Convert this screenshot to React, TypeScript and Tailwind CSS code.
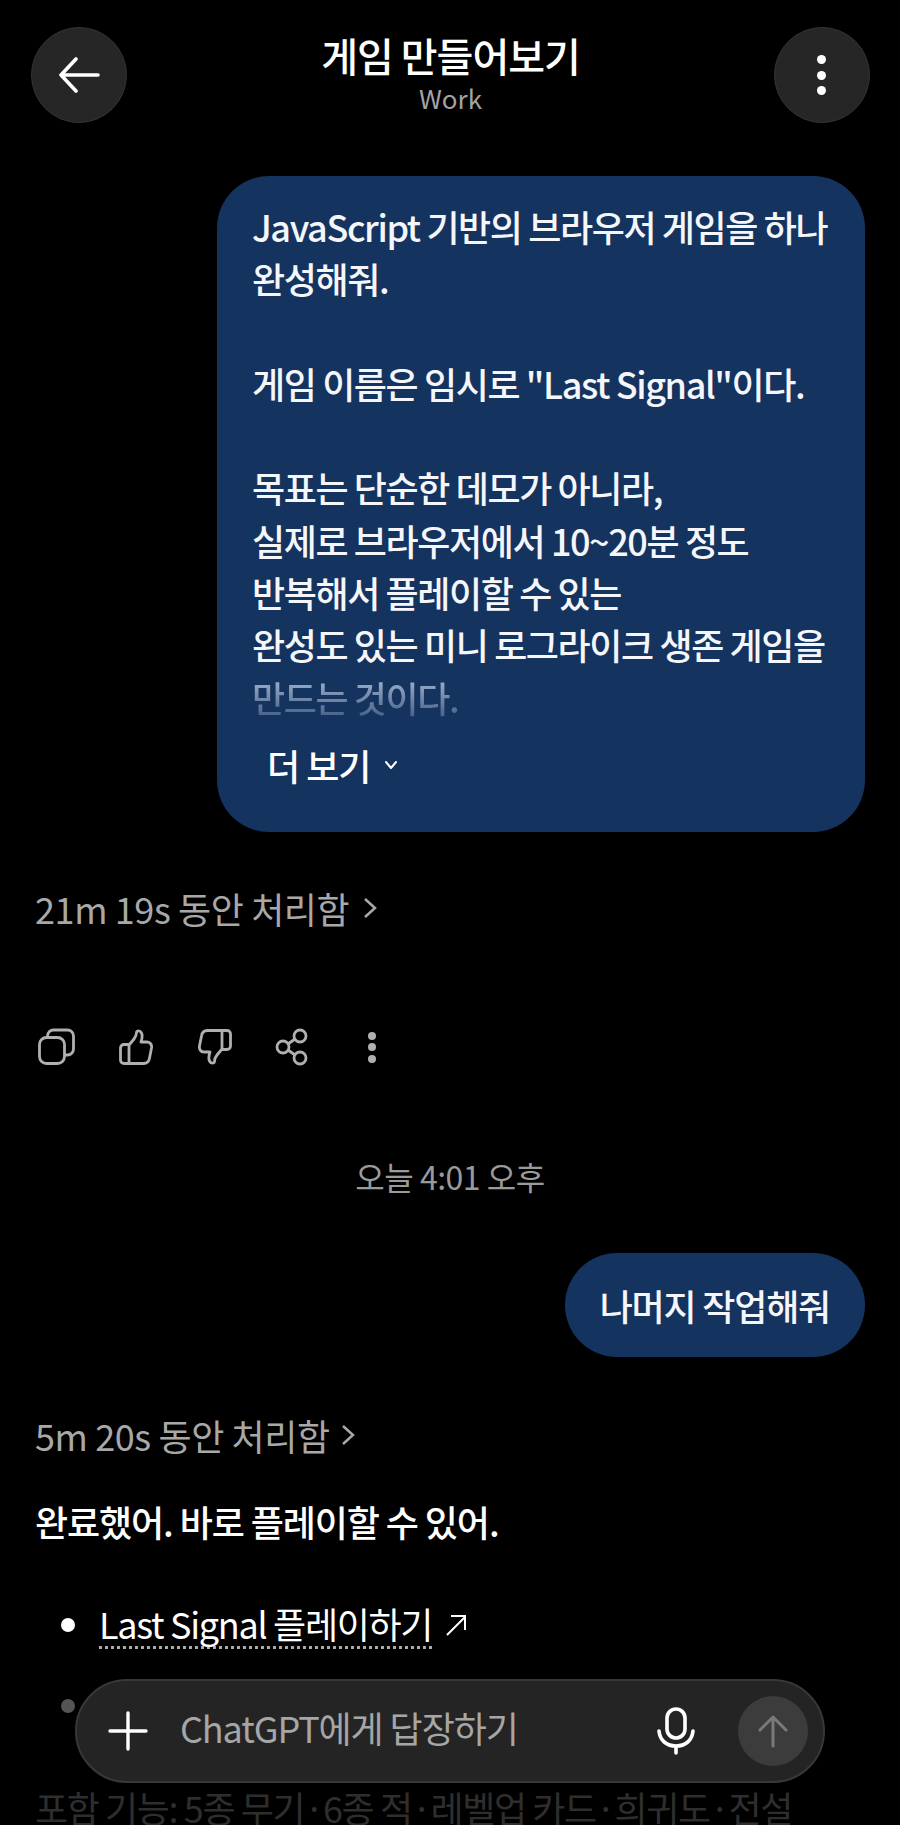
const font = { fontFamily: '"Noto Sans CJK KR", "Noto Sans", sans-serif' }

function Dots({ className, dot }: { className: string; dot: string }) {
    return (
        <div className={`flex flex-col items-center justify-between ${className}`}>
            <span className={`rounded-full bg-current ${dot}`} />
            <span className={`rounded-full bg-current ${dot}`} />
            <span className={`rounded-full bg-current ${dot}`} />
        </div>
    )
}

function CopyIcon() {
    return (
        <svg width="38" height="38" viewBox="0 0 38 38" fill="none" stroke="currentColor" strokeWidth="2.8" strokeLinejoin="round">
            <rect x="1.5" y="9.5" width="25" height="26" rx="7" />
            <path d="M9.5 9.5V8a6 6 0 0 1 6-6h14a6 6 0 0 1 6 6v13a6 6 0 0 1-6 6h-3" />
        </svg>
    )
}

function ThumbIcon({ className }: { className: string }) {
    return (
        <svg className={className} width="34" height="36" viewBox="0 0 34 36" fill="none" stroke="currentColor" strokeWidth="2.8" strokeLinejoin="round" strokeLinecap="round">
            <path d="M10 16l5-6c2-2.500 2.500-5 2.500-6.500 0-2 3.500-2.500 5 .5s.5 6-.5 9h6c3.500 0 5 3 4.500 6l-2 10c-.5 3.500-3 5.500-6 5.500H5c-2 0-3.500-1.500-3.500-3.500V19c0-2 1.500-3.500 3.500-3.500h5v19" />
        </svg>
    )
}

function ShareIcon() {
    return (
        <svg width="34" height="38" viewBox="0 0 34 38" fill="none" stroke="currentColor" strokeWidth="2.8">
            <circle cx="25" cy="8" r="6" />
            <circle cx="8" cy="19" r="6" />
            <circle cx="25" cy="30" r="6" />
            <path d="M13 16l7-5M13 22l7 5" />
        </svg>
    )
}

export default function App() {
    return (
        <div style={font} className="relative w-[900px] h-[1825px] overflow-hidden bg-black text-white">
            {/* header */}
            <header className="flex items-center justify-between pl-[31px] pr-[30px] pt-[27px]">
                <button className="flex items-center justify-center w-[96px] h-[96px] rounded-full bg-[#262626] border border-[#333]">
                    <svg width="42" height="36" viewBox="0 0 42 36" fill="none" stroke="white" strokeWidth="3.6" strokeLinecap="round" strokeLinejoin="round">
                        <path d="M40 18H3M18 2L3 18l15 16" />
                    </svg>
                </button>
                <div className="flex flex-col items-center">
                    <p className="text-[40px] leading-[46px] font-medium tracking-[-1px]">게임 만들어보기</p>
                    <p className="text-[26px] leading-[40px] text-[#a3a3a3]">Work</p>
                </div>
                <button className="flex items-center justify-center w-[96px] h-[96px] rounded-full bg-[#262626] border border-[#333]">
                    <Dots className="h-[40px] text-white" dot="w-[9px] h-[9px]" />
                </button>
            </header>

            {/* first message */}
            <div className="flex justify-end pr-[35px] mt-[53px]">
                <div className="relative w-[648px] h-[656px] rounded-[52px] bg-[#15335f] pl-[35px] pt-[24px]">
                    <p className="text-[36px] leading-[52.3px] font-medium tracking-[-1.4px] whitespace-pre text-[#f4f6fa]">
                        {'JavaScript 기반의 브라우저 게임을 하나\n완성해줘.\n\n게임 이름은 임시로 "Last Signal"이다.\n\n목표는 단순한 데모가 아니라,\n실제로 브라우저에서 10~20분 정도\n반복해서 플레이할 수 있는\n완성도 있는 미니 로그라이크 생존 게임을\n'}
                        <span className="bg-gradient-to-b from-[#b4c2d8] to-[#3a567e] bg-clip-text text-transparent">만드는 것이다.</span>
                    </p>
                    <div className="flex items-center gap-[14px] pl-[15px] mt-[17px]">
                        <span className="text-[36px] leading-[50px] font-medium tracking-[-1px]">더 보기</span>
                        <svg width="14" height="10" viewBox="0 0 14 10" fill="none" stroke="white" strokeWidth="2" strokeLinecap="round" strokeLinejoin="round">
                            <path d="M2 2l5 6 5-6" />
                        </svg>
                    </div>
                </div>
            </div>

            {/* thought time + actions */}
            <div className="flex items-center gap-[14px] pl-[35px] mt-[52px] text-[#a8a8a8]">
                <span className="text-[36px] leading-[48px] tracking-[-0.4px]">21m 19s 동안 처리함</span>
                <svg width="14" height="24" viewBox="0 0 14 24" fill="none" stroke="currentColor" strokeWidth="2.5">
                    <path d="M2 3l10 9-10 9" />
                </svg>
            </div>
            <div className="flex items-center pl-[38px] mt-[96px] h-[38px] text-[#b0b0b0]">
                <CopyIcon />
                <ThumbIcon className="ml-[43px]" />
                <ThumbIcon className="ml-[45px] rotate-180" />
                <div className="ml-[43px]"><ShareIcon /></div>
                <Dots className="h-[31px] ml-[59px]" dot="w-[8px] h-[8px]" />
            </div>

            <p className="text-center text-[32px] leading-[40px] text-[#9a9a9a] tracking-[-0.5px] mt-[90px]">오늘 4:01 오후</p>

            {/* second message */}
            <div className="flex justify-end pr-[35px] mt-[57px]">
                <div className="flex items-center h-[104px] px-[35px] rounded-full bg-[#15335f]">
                    <span className="text-[36px] font-medium tracking-[-1.2px] text-[#f4f6fa]">나머지 작업해줘</span>
                </div>
            </div>

            <div className="flex items-center gap-[11px] pl-[35px] mt-[54px] text-[#a8a8a8]">
                <span className="text-[36px] leading-[48px] tracking-[-0.4px]">5m 20s 동안 처리함</span>
                <svg width="14" height="24" viewBox="0 0 14 24" fill="none" stroke="currentColor" strokeWidth="2.5">
                    <path d="M2 3l10 9-10 9" />
                </svg>
            </div>

            <p className="pl-[35px] mt-[37px] text-[36px] leading-[50px] font-medium tracking-[-1.1px]">완료했어. 바로 플레이할 수 있어.</p>

            <div className="flex items-center pl-[61px] mt-[54px]">
                <span className="w-[14px] h-[14px] rounded-full bg-white" />
                <span className="ml-[24px] text-[36px] leading-[46px] tracking-[-1.3px] border-b-[3px] border-dotted border-[#aaa]">Last Signal 플레이하기</span>
                <svg className="ml-[12px]" width="24" height="24" viewBox="0 0 24 24" fill="none" stroke="white" strokeWidth="2">
                    <path d="M3 22L21 4M7 3h14v14" />
                </svg>
            </div>

            <div className="flex pl-[61px] mt-[50px] h-[24px]">
                <span className="w-[14px] h-[14px] rounded-full bg-[#555]" />
            </div>

            <p className="pl-[35px] mt-[60px] text-[36px] leading-[48px] tracking-[-1.4px] text-[#2e2e2e] whitespace-nowrap">포함 기능: 5종 무기·6종 적·레벨업 카드·희귀도·전설</p>

            {/* composer */}
            <div className="absolute left-[75px] top-[1679px] flex items-center w-[750px] h-[104px] rounded-full bg-[#242424] border-2 border-[#383838]">
                <svg className="ml-[31px]" width="40" height="40" viewBox="0 0 40 40" fill="none" stroke="white" strokeWidth="3.4" strokeLinecap="round">
                    <path d="M20 2v36M2 20h36" />
                </svg>
                <span className="ml-[32px] pb-[8px] text-[36px] tracking-[-1.1px] text-[#a6a6a6]">ChatGPT에게 답장하기</span>
                <svg className="ml-auto" width="38" height="48" viewBox="0 0 38 48" fill="none" stroke="white" strokeWidth="3.6" strokeLinecap="round">
                    <rect x="10" y="2" width="18" height="29" rx="9" />
                    <path d="M2 24c1 10 8 15 17 15s16-5 17-15M19 39v7" />
                </svg>
                <div className="flex items-center justify-center w-[70px] h-[70px] ml-[43px] mr-[15px] rounded-full bg-[#3c3c3c]">
                    <svg width="30" height="34" viewBox="0 0 30 34" fill="none" stroke="#7a7a7a" strokeWidth="3" strokeLinecap="round" strokeLinejoin="round">
                        <path d="M15 32V3M2 16L15 3l13 13" />
                    </svg>
                </div>
            </div>
        </div>
    )
}
